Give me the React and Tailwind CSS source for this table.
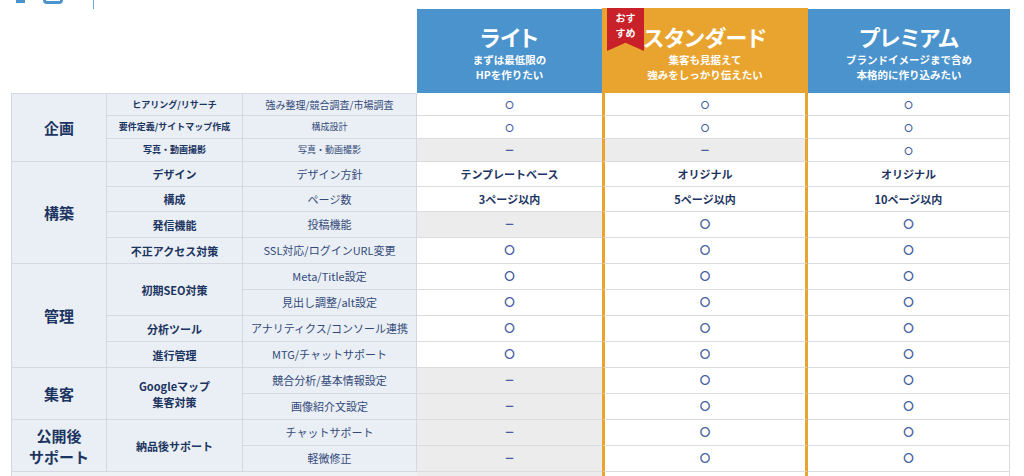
import React from "react";

const groups = [
  {
    cat: ["企画"],
    span: "row-span-3",
    rows: [
      { sub: "ヒアリング/リサーチ", subSpan: "", subSize: "text-[9px]", detail: "強み整理/競合調査/市場調査", dSize: "text-[10px]", vals: ["○", "○", "○"], small: true },
      { sub: "要件定義/サイトマップ作成", subSpan: "", subSize: "text-[9px]", detail: "構成設計", dSize: "text-[9px]", vals: ["○", "○", "○"], small: true },
      { sub: "写真・動画撮影", subSpan: "", subSize: "text-[9px]", detail: "写真・動画撮影", dSize: "text-[9px]", vals: ["—", "—", "○"], small: true },
    ],
  },
  {
    cat: ["構築"],
    span: "row-span-4",
    rows: [
      { sub: "デザイン", subSpan: "", subSize: "text-[11px]", detail: "デザイン方針", dSize: "text-[11px]", vals: ["テンプレートベース", "オリジナル", "オリジナル"] },
      { sub: "構成", subSpan: "", subSize: "text-[11px]", detail: "ページ数", dSize: "text-[11px]", vals: ["3ページ以内", "5ページ以内", "10ページ以内"] },
      { sub: "発信機能", subSpan: "", subSize: "text-[11px]", detail: "投稿機能", dSize: "text-[11px]", vals: ["—", "○", "○"] },
      { sub: "不正アクセス対策", subSpan: "", subSize: "text-[11px]", detail: "SSL対応/ログインURL変更", dSize: "text-[11px]", vals: ["○", "○", "○"] },
    ],
  },
  {
    cat: ["管理"],
    span: "row-span-4",
    rows: [
      { sub: "初期SEO対策", subSpan: "row-span-2", subSize: "text-[11px]", detail: "Meta/Title設定", dSize: "text-[11px]", vals: ["○", "○", "○"] },
      { sub: null, detail: "見出し調整/alt設定", dSize: "text-[11px]", vals: ["○", "○", "○"] },
      { sub: "分析ツール", subSpan: "", subSize: "text-[11px]", detail: "アナリティクス/コンソール連携", dSize: "text-[11px]", vals: ["○", "○", "○"] },
      { sub: "進行管理", subSpan: "", subSize: "text-[11px]", detail: "MTG/チャットサポート", dSize: "text-[11px]", vals: ["○", "○", "○"] },
    ],
  },
  {
    cat: ["集客"],
    span: "row-span-2",
    rows: [
      { sub: ["Googleマップ", "集客対策"], subSpan: "row-span-2", subSize: "text-[11px]", detail: "競合分析/基本情報設定", dSize: "text-[11px]", vals: ["—", "○", "○"] },
      { sub: null, detail: "画像紹介文設定", dSize: "text-[11px]", vals: ["—", "○", "○"] },
    ],
  },
  {
    cat: ["公開後", "サポート"],
    span: "row-span-2",
    rows: [
      { sub: "納品後サポート", subSpan: "row-span-2", subSize: "text-[11px]", detail: "チャットサポート", dSize: "text-[11px]", vals: ["—", "○", "○"] },
      { sub: null, detail: "軽微修正", dSize: "text-[11px]", vals: ["—", "○", "○"] },
    ],
  },
];

function Val({ v, small }) {
  if (v === "○") {
    return (
      <span className={`${small ? "text-[8.5px]" : "text-[10.5px]"} font-bold text-[#4460a0] leading-none`}>〇</span>
    );
  }
  if (v === "—") {
    return <span className="text-[9px] font-bold text-[#4460a0] leading-none">ー</span>;
  }
  return <span className="text-[11px] font-bold text-[#1c3461]">{v}</span>;
}

function Header({ title, lines, orange }) {
  return (
    <div
      className={`${
        orange
          ? "relative -mt-px bg-[#e9a42f] border-x-[3px] border-x-[#e9a42f] pt-[14px]"
          : "bg-[#4a93cd] pt-[13px]"
      } flex flex-col items-center text-white`}
    >
      {orange && (
        <div className="absolute left-[2px] top-0 w-[37px] h-[43px] bg-[#c9212a] [clip-path:polygon(0_0,100%_0,100%_100%,50%_81%,0_100%)] flex flex-col items-center pt-[2px] text-[10px] leading-[15px] font-bold text-white">
          <span>おす</span>
          <span>すめ</span>
        </div>
      )}
      <div className="text-[22px] leading-[28px] font-bold [font-feature-settings:'palt']">{title}</div>
      <div className="mt-[2px] text-[10.5px] leading-[15px] font-bold text-center">
        {lines.map((l) => (
          <div key={l}>{l}</div>
        ))}
      </div>
    </div>
  );
}

export default function App() {
  const cells = [];
  groups.forEach((g, gi) => {
    g.rows.forEach((r, ri) => {
      const first = gi === 0 && ri === 0;
      if (ri === 0) {
        cells.push(
          <div
            key={`c${gi}`}
            className={`${g.span} ${first ? "border-t" : ""} bg-[#e9eff4] border-l border-r border-b border-[#d3d9de] flex flex-col items-center justify-center text-[15px] leading-[21px] font-bold text-[#1c3461]`}
          >
            {g.cat.map((c) => (
              <span key={c} className="block">{c}</span>
            ))}
          </div>
        );
      }
      if (r.sub) {
        cells.push(
          <div
            key={`s${gi}-${ri}`}
            className={`${r.subSpan} ${first ? "border-t" : ""} ${r.subSize} bg-[#e9eff4] border-r border-b border-[#d3d9de] flex flex-col items-center justify-center font-bold text-[#1c3461] leading-[16px] text-center`}
          >
            {Array.isArray(r.sub) ? r.sub.map((s) => <span key={s} className="block">{s}</span>) : r.sub}
          </div>
        );
      }
      cells.push(
        <div
          key={`d${gi}-${ri}`}
          className={`${first ? "border-t" : ""} ${r.dSize} bg-[#e9eff4] border-r border-b border-[#d3d9de] flex items-center justify-center text-[#34497a] whitespace-nowrap`}
        >
          {r.detail}
        </div>
      );
      r.vals.forEach((v, vi) => {
        const gray = v === "—";
        let cls = "";
        if (vi === 0) cls = "border-b border-b-[#dcdcdc]";
        if (vi === 1) cls = "border-x-[3px] border-x-[#e9a42f] border-b border-b-[#dcdcdc]";
        if (vi === 2) cls = "border-b border-r border-[#dcdcdc]";
        cells.push(
          <div
            key={`v${gi}-${ri}-${vi}`}
            className={`${cls} ${gray ? "bg-[#ececec]" : "bg-white"} flex items-center justify-center`}
          >
            <Val v={v} small={r.small} />
          </div>
        );
      });
    });
  });

  return (
    <div className="w-[1024px] h-[476px] overflow-hidden bg-white font-['Noto_Sans_CJK_JP','Noto_Sans',sans-serif]">
      <div className="h-[9px] flex items-start pl-[16px]">
        <div className="w-[9px] h-[3px] bg-[#4a93cd]" />
        <div className="ml-[18px] w-[20px] h-[4px] rounded-b-[10px] border-x-[3px] border-b-[3px] border-[#4a93cd]" />
        <div className="ml-[30px] w-px h-[9px] bg-[#6ea9d9]" />
      </div>
      <div className="ml-[11px] grid grid-cols-[96px_136px_174px_185px_206px_202px] grid-rows-[84px_23px_23px_23px_25px_25px_26px_26px_26px_26px_26px_26px_26px_26px_26px_26px_26px]">
        <div className="col-span-3" />
        <Header title="ライト" lines={["まずは最低限の", "HPを作りたい"]} />
        <Header title="スタンダード" lines={["集客も見据えて", "強みをしっかり伝えたい"]} orange />
        <Header title="プレミアム" lines={["ブランドイメージまで含め", "本格的に作り込みたい"]} />
        {cells}
        <div className="col-span-3 bg-[#eef2f5] border-l border-[#d3d9de]" />
        <div className="bg-[#ececec]" />
        <div className="border-x-[3px] border-x-[#e9a42f] bg-white" />
        <div className="border-r border-[#dcdcdc] bg-white" />
      </div>
    </div>
  );
}
